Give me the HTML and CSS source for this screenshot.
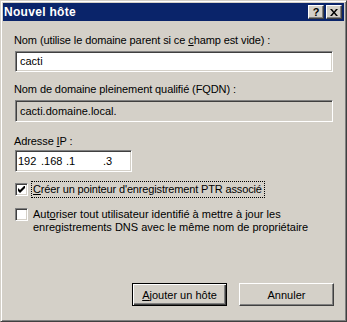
FILE: index.html
```html
<!DOCTYPE html>
<html lang="fr">

<head>
    <meta charset="utf-8">
    <title>Nouvel hôte</title>
    <link rel="stylesheet" href="styles.css">
</head>

<body>
    <div class="window">
        <div class="titlebar">
            <span class="title">Nouvel hôte</span>
            <div class="caption-buttons">
                <button class="cap-btn">?</button>
                <button class="cap-btn">
                    <svg width="8" height="7" viewBox="0 0 8 7">
                        <path d="M0 0h2l2 2.5L6 0h2L5 3.5 8 7H6L4 4.5 2 7H0l3-3.5z" fill="#000" />
                    </svg>
                </button>
            </div>
        </div>

        <div class="content">
            <label class="lbl name">Nom (utilise le domaine parent si ce <u>c</u>hamp est vide) :</label>
            <div class="field wide">cacti</div>

            <label class="lbl fqdn">Nom de domaine pleinement qualifié (FQDN) :</label>
            <div class="field wide readonly">cacti.domaine.local.</div>

            <label class="lbl addr">Adresse <u>I</u>P :</label>
            <div class="field ip">
                <span class="oct o1">192</span><span class="oct o2">.168</span><span class="oct o3">.1</span><span class="oct">.3</span>
            </div>

            <div class="check">
                <span class="box">
                    <svg width="7" height="7" viewBox="0 0 7 7">
                        <path d="M0 2v3l2 2 5-5V-1L2 4z" fill="#000" />
                    </svg>
                </span>
                <span class="focus"><u>C</u>réer un pointeur d'enregistrement PTR associé</span>
            </div>

            <div class="check">
                <span class="box"></span>
                <span class="text">Aut<u>o</u>riser tout utilisateur identifié à mettre à jour les<br>enregistrements DNS avec le même nom de propriétaire</span>
            </div>

            <div class="actions">
                <button class="btn default"><span><u>A</u>jouter un hôte</span></button>
                <button class="btn"><span>Annuler</span></button>
            </div>
        </div>
    </div>
</body>

</html>
```

FILE: styles.css
```css
body {
    margin: 0;
    background-color: #d4d0c8;
    font-family: 'Liberation Sans', 'DejaVu Sans', sans-serif;
    font-size: 11px;
    color: #000;
}

.window {
    width: 347px;
    height: 322px;
    box-sizing: border-box;
    border: 1px solid;
    border-color: #d4d0c8 #404040 #404040 #d4d0c8;
    box-shadow: inset 1px 1px #fff, inset -1px -1px #808080;
    padding: 2px;
    display: flex;
    flex-direction: column;
}

.titlebar {
    height: 18px;
    flex: none;
    background-color: #0a246a;
    display: flex;
    align-items: center;
    justify-content: space-between;
    padding: 0 2px 0 1px;
}

.title {
    color: #fff;
    font-weight: bold;
    font-size: 12px;
    letter-spacing: 0.3px;
}

.caption-buttons {
    display: flex;
    gap: 2px;
}

.cap-btn {
    width: 16px;
    height: 14px;
    padding: 0;
    margin: 0;
    background-color: #d4d0c8;
    border: 1px solid;
    border-color: #fff #404040 #404040 #fff;
    box-shadow: inset -1px -1px #808080;
    font-family: 'Liberation Sans', sans-serif;
    font-weight: bold;
    font-size: 11px;
    line-height: 10px;
    display: flex;
    align-items: center;
    justify-content: center;
}

.content {
    flex: 1;
    display: flex;
    flex-direction: column;
    padding: 13px 10px 0 12px;
}

.lbl {
    display: block;
    line-height: 13px;
    margin-left: -1px;
    letter-spacing: -0.1px;
}

.lbl.name {
    margin-bottom: 4px;
}

.lbl.fqdn {
    margin-top: 11px;
    margin-bottom: 4px;
}

.lbl.addr {
    margin-top: 13px;
    margin-bottom: 2px;
}

.field {
    height: 21px;
    flex: none;
    box-sizing: border-box;
    background-color: #fff;
    border: 1px solid;
    border-color: #808080 #fff #fff #808080;
    box-shadow: inset 1px 1px #404040, inset -1px -1px #d4d0c8;
    padding: 0 4px;
    line-height: 19px;
}

.field.wide {
    width: 318px;
}

.field.readonly {
    background-color: #d4d0c8;
    height: 22px;
    line-height: 20px;
}

.field.ip {
    width: 117px;
    height: 22px;
    line-height: 20px;
    padding-left: 2px;
}

.oct {
    display: inline-block;
}

.o1 {
    width: 23px;
}

.o2 {
    width: 25px;
}

.o3 {
    width: 37px;
}

.check {
    display: flex;
    align-items: flex-start;
    line-height: 13px;
    margin-top: 11px;
}

.box {
    width: 13px;
    height: 13px;
    flex: none;
    box-sizing: border-box;
    background-color: #fff;
    border: 1px solid;
    border-color: #808080 #fff #fff #808080;
    box-shadow: inset 1px 1px #404040, inset -1px -1px #d4d0c8;
    display: flex;
    align-items: center;
    justify-content: center;
    margin-right: 4px;
}

.focus {
    outline: 1px dotted #000;
    padding: 1px 2px 1px 1px;
    margin-top: -1px;
    letter-spacing: -0.15px;
}

.text {
    padding-left: 1px;
}

.actions {
    margin-top: auto;
    margin-bottom: 13px;
    display: flex;
    justify-content: flex-end;
    gap: 12px;
}

.btn {
    width: 95px;
    height: 23px;
    padding: 0;
    margin: 0;
    background-color: #d4d0c8;
    font-family: 'Liberation Sans', sans-serif;
    font-size: 11px;
    color: #000;
    border: 1px solid;
    border-color: #fff #404040 #404040 #fff;
    box-shadow: inset -1px -1px #808080;
}

.btn.default {
    border-color: #000;
    box-shadow: inset 1px 1px #fff, inset -1px -1px #404040, inset -2px -2px #808080;
}
```
